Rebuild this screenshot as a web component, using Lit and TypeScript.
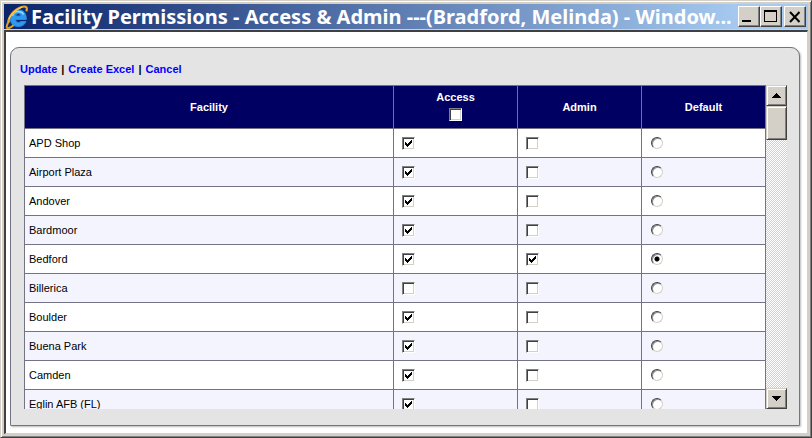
import { LitElement, html, css, svg } from "lit";
import { customElement, state } from "lit/decorators.js";

interface Facility {
  name: string;
  access: boolean;
  admin: boolean;
  isDefault: boolean;
}

const row = (name: string, access = true, admin = false, isDefault = false): Facility => ({
  name,
  access,
  admin,
  isDefault,
});

const browserIcon = svg`
  <svg class="logo" viewBox="0 0 24 24" width="24" height="24" aria-hidden="true">
    <path d="M21 16.500C19.500 20 17 21.500 13.200 21.500 8.300 21.500 5.300 18.300 5.300 13.300 5.300 8.300 8.500 4.800 13.300 4.800c5 0 8.200 3.400 8 9.700H10.600c.2 1.900 1.200 2.900 2.800 2.900 1.100 0 1.900-.3 2.300-.9zM10.700 11h5c-.2-1.600-1.100-2.400-2.500-2.400-1.500 0-2.300.9-2.500 2.400z"
      fill="#2b9af0" stroke="#2b8ae0" stroke-width="1" />
    <path d="M7.500 11c.5-3 3-4.500 5.800-4.500 2.500 0 4.500 1.200 5.400 3" fill="none" stroke="#8fdcff" stroke-width="1.600" />
    <path d="M4.200 15.500C1 21 .8 24 4 23c1.800-.6 3.300-1.600 4.700-2.900" fill="none" stroke="#e39c1a" stroke-width="2" />
    <path d="M3.500 17.500C3 12 9 4.500 16.500 2 21.500.6 22.700 2.500 21.300 6.300" fill="none" stroke="#eba526" stroke-width="2.200" />
    <path d="M4 14C6 9 11.500 4 17 2.300" fill="none" stroke="#ffd768" stroke-width="1" />
  </svg>`;

@customElement("app-root")
export class AppRoot extends LitElement {
  @state() private facilities: Facility[] = [
    row("APD Shop"),
    row("Airport Plaza"),
    row("Andover"),
    row("Bardmoor"),
    row("Bedford", true, true, true),
    row("Billerica", false),
    row("Boulder"),
    row("Buena Park"),
    row("Camden"),
    row("Eglin AFB (FL)"),
  ];

  static styles = css`
    :host {
      display: block;
      font: 11px/14px "Liberation Sans", Arial, sans-serif;
      color: #000;
    }
    * {
      box-sizing: border-box;
    }
    .window {
      height: 100vh;
      display: flex;
      flex-direction: column;
      padding: 3px;
      background: #d4d0c8;
      border: 1px solid;
      border-color: #d4d0c8 #404040 #404040 #d4d0c8;
      box-shadow: inset 1px 1px #fff, inset -1px -1px #808080;
    }
    .titlebar {
      flex: none;
      height: 25px;
      display: flex;
      align-items: center;
      gap: 2px;
      padding: 0 2px 0 1px;
      background: linear-gradient(90deg, #0a246a, #a6caf0 92%);
    }
    .logo {
      flex: none;
    }
    .title {
      flex: 1;
      min-width: 0;
      margin: 0;
      overflow-x: clip;
      white-space: nowrap;
      color: #fff;
      font: bold 20px/24px "Noto Sans", Verdana, sans-serif;
    }
    .controls {
      display: flex;
    }
    .bevel {
      display: grid;
      place-items: center;
      padding: 0;
      background: #d4d0c8;
      border: 1px solid;
      border-color: #fff #404040 #404040 #fff;
      box-shadow: inset -1px -1px #808080;
      border-radius: 0;
    }
    .controls .bevel {
      width: 22px;
      height: 21px;
    }
    .close {
      margin-left: 2px;
    }
    .client {
      flex: 1;
      min-height: 0;
      display: flex;
      margin-top: 1px;
      padding: 15px 7px 7px 4px;
      background: #fff;
      border: 2px solid;
      border-width: 2px 1px 1px 2px;
      border-color: #404040 #d4d0c8 #d4d0c8 #404040;
    }
    .panel {
      flex: 1;
      min-width: 0;
      display: flex;
      flex-direction: column;
      padding: 14px 12px 16px 13px;
      background: #e4e4e4;
      border: 1px solid #737385;
      border-radius: 9px 9px 1px 1px;
      box-shadow: 1px 1px 2px #bbb;
    }
    .actions {
      flex: none;
      display: flex;
      gap: 4px;
      margin: 0 0 9px -4px;
      font-weight: bold;
    }
    .actions a {
      color: #00f;
      text-decoration: none;
    }
    .scroller {
      flex: 1;
      min-height: 0;
      display: flex;
    }
    .viewport {
      flex: 1;
      min-width: 0;
      overflow: hidden;
    }
    table {
      width: 100%;
      table-layout: fixed;
      border-collapse: collapse;
    }
    .choice {
      width: 124px;
    }
    th,
    td {
      padding: 0 4px;
      border: 1px solid #737385;
    }
    th {
      height: 43px;
      background: #000063;
      color: #fff;
      text-align: center;
    }
    td {
      height: 29px;
      background: #fff;
    }
    tr:nth-child(even) td {
      background: #f4f4ff;
    }
    .all {
      display: flex;
      flex-direction: column;
      align-items: center;
      gap: 4px;
      padding-bottom: 3px;
    }
    input {
      display: block;
      appearance: none;
      margin: 0;
    }
    td input {
      margin-left: 4px;
    }
    input[type="checkbox"] {
      width: 13px;
      height: 13px;
      background: #fff;
      border: 1px solid;
      border-color: #808080 #fff #fff #808080;
      box-shadow: inset 1px 1px #404040, inset -1px -1px #d4d0c8;
    }
    input[type="checkbox"]:checked {
      background: #fff
        url("data:image/svg+xml,%3Csvg xmlns='http://www.w3.org/2000/svg' width='7' height='7'%3E%3Cpath d='M0 2h1v1h1v1h1v-1h1v-1h1v-1h1v-1h1v3h-1v1h-1v1h-1v1h-1v1h-1v-1h-1v-1h-1z'/%3E%3C/svg%3E")
        2px 2px no-repeat;
    }
    input[type="radio"] {
      width: 12px;
      height: 12px;
      margin-left: 5px;
      background: #fff;
      border: 1px solid;
      border-color: #404040 #d4d0c8 #d4d0c8 #404040;
      border-radius: 50%;
      box-shadow: inset 1px 1px #909090;
    }
    input[type="radio"]:checked {
      background: radial-gradient(circle, #000 2px, #fff 3px);
    }
    .scrollbar {
      flex: none;
      width: 21px;
      display: flex;
      flex-direction: column;
      background: repeating-conic-gradient(#fff 0 25%, #d4d0c8 0 50%) 0 0 / 2px 2px;
    }
    .scrollbar .bevel {
      width: 21px;
      height: 21px;
      border-color: #d4d0c8 #404040 #404040 #d4d0c8;
      box-shadow: inset 1px 1px #fff, inset -1px -1px #808080;
    }
    .scrollbar .thumb {
      height: 34px;
    }
    .track {
      flex: 1;
    }
  `;

  private toggleAll(e: Event) {
    const access = (e.target as HTMLInputElement).checked;
    this.facilities = this.facilities.map((f) => ({ ...f, access }));
  }

  render() {
    return html`
      <div class="window">
        <header class="titlebar">
          ${browserIcon}
          <h1 class="title">Facility Permissions - Access &amp; Admin ---(Bradford, Melinda) - Window...</h1>
          <div class="controls">
            <button class="bevel" aria-label="Minimize">
              <svg width="14" height="13"><path d="M0 10h9v2h-9z" /></svg>
            </button>
            <button class="bevel" aria-label="Maximize">
              <svg width="14" height="13"><path fill-rule="evenodd" d="M0 0h13v12H0zM1 2v9h11V2z" /></svg>
            </button>
            <button class="bevel close" aria-label="Close">
              <svg width="12" height="12"><path d="M1 1l9.500 10M10.500 1L1 11" stroke="#000" stroke-width="2" /></svg>
            </button>
          </div>
        </header>
        <main class="client">
          <section class="panel">
            <nav class="actions">
              <a href="#update">Update</a><span>|</span><a href="#excel">Create Excel</a><span>|</span
              ><a href="#cancel">Cancel</a>
            </nav>
            <div class="scroller">
              <div class="viewport">
                <table>
                  <colgroup>
                    <col />
                    <col class="choice" />
                    <col class="choice" />
                    <col class="choice" />
                  </colgroup>
                  <thead>
                    <tr>
                      <th scope="col">Facility</th>
                      <th scope="col">
                        <label class="all">Access<input type="checkbox" @change=${this.toggleAll} /></label>
                      </th>
                      <th scope="col">Admin</th>
                      <th scope="col">Default</th>
                    </tr>
                  </thead>
                  <tbody>
                    ${this.facilities.map(
                      (f) => html`<tr>
                        <td>${f.name}</td>
                        <td><input type="checkbox" aria-label="Access to ${f.name}" .checked=${f.access} /></td>
                        <td><input type="checkbox" aria-label="Admin of ${f.name}" .checked=${f.admin} /></td>
                        <td>
                          <input type="radio" name="default" aria-label="Default ${f.name}" .checked=${f.isDefault} />
                        </td>
                      </tr>`
                    )}
                  </tbody>
                </table>
              </div>
              <div class="scrollbar">
                <button class="bevel" aria-label="Scroll up">
                  <svg width="9" height="5"><path d="M4 0h1v1h1v1h1v1h1v1h1v1H0V4h1V3h1V2h1V1h1z" /></svg>
                </button>
                <div class="bevel thumb"></div>
                <div class="track"></div>
                <button class="bevel" aria-label="Scroll down">
                  <svg width="9" height="5"><path d="M0 0h9v1H8v1H7v1H6v1H5v1H4V4H3V3H2V2H1V1H0z" /></svg>
                </button>
              </div>
            </div>
          </section>
        </main>
      </div>
    `;
  }
}
